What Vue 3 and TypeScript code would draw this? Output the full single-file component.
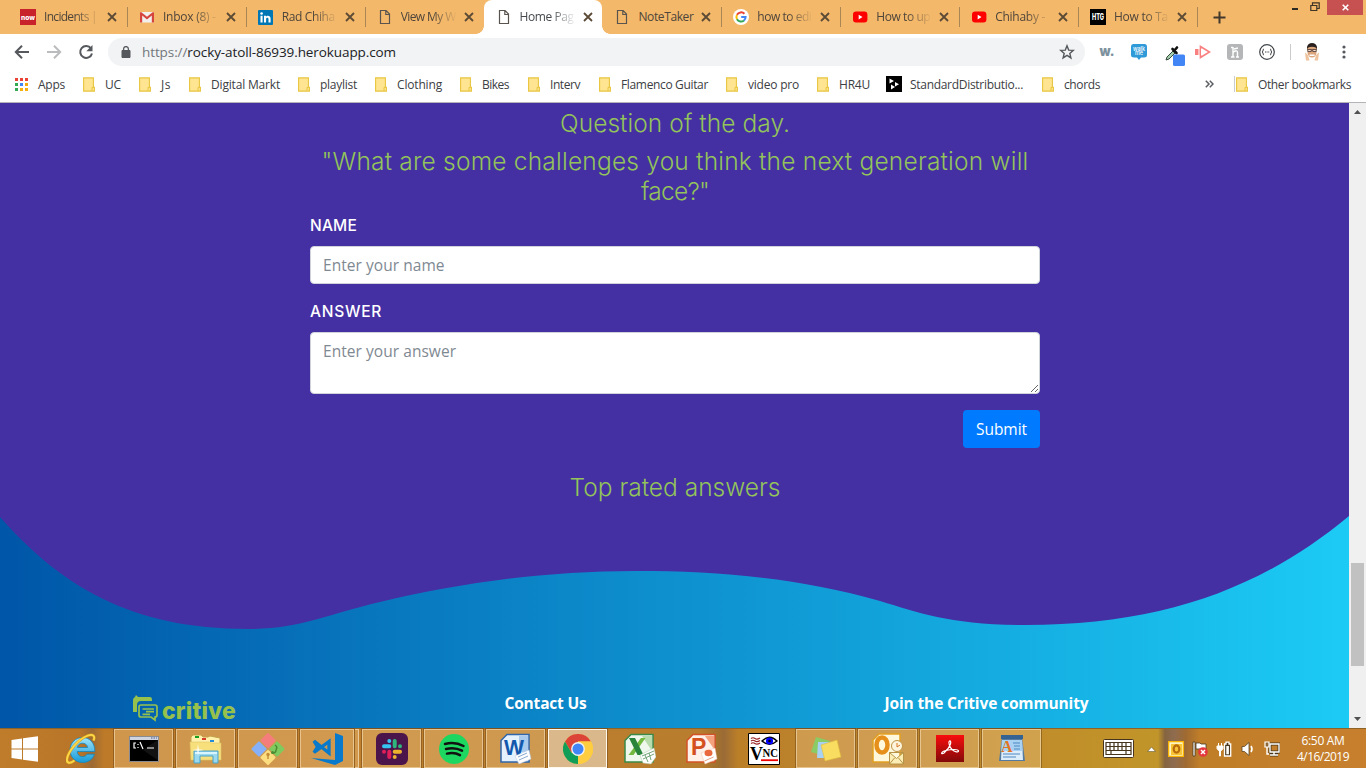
<script setup lang="ts">
interface Tab { icon: string; label: string; width: number; active?: boolean; sep?: boolean; fade?: boolean }
interface Bookmark { icon: string; label: string; width: number; slot: number }
interface Task { icon: string; open?: boolean; current?: boolean; stacked?: boolean }

/* Spreads the letters of a run of text over a given width in pixels. */
const vFit = {
  mounted(el: HTMLElement, binding: { value: number }) {
    const count = (el.textContent ?? '').trim().length
    const natural = el.getBoundingClientRect().width
    if (count > 1) el.style.letterSpacing = `${(binding.value - natural) / count}px`
  },
}

const page = '<svg width="16" height="16" viewBox="0 0 16 16"><path d="M3.5 1.5h5.6l3.4 3.6v9.4h-9zM8.8 1.7v3.8h3.7" fill="none" stroke="#59544e" stroke-width="1.2"/></svg>'
const youtube = '<svg width="16" height="16" viewBox="0 0 16 16"><rect x="1" y="2.6" width="14.4" height="11" rx="3" fill="#f00"/><path d="M6.7 5.7v4.8l3.8-2.4z" fill="#fff"/></svg>'
const folder = '<svg width="12" height="15" viewBox="0 0 12 15"><path d="M.6.9h9.8v9.3h1v3.9H.6z" fill="#ffe591" stroke="#e8c53f" stroke-width="1.1"/><path d="M9 13.8v-3.4h1.6" fill="none" stroke="#e8c53f"/></svg>'

const icons: Record<string, string> = {
  page, youtube, folder,
  now: '<svg width="16" height="16" viewBox="0 0 16 16"><path fill="#c8222b" d="M0 0h16v16H0z"/><text x="8" y="10.6" text-anchor="middle" textLength="14" lengthAdjust="spacingAndGlyphs" font-family="Inter,sans-serif" font-weight="800" font-size="7" fill="#fff">now</text></svg>',
  gmail: '<svg width="16" height="16" viewBox="0 0 16 16"><path fill="#f2f0ee" d="M1 3h14v10.5H1z"/><path d="M1 13.500V3.200h1.400L8 7.700l5.600-4.500H15v10.300h-2.200V6.600L8 10.500 3.200 6.600v6.900z" fill="#d6453b"/></svg>',
  linkedin: '<svg width="15" height="15" viewBox="0 0 15 15"><rect width="15" height="15" rx="1" fill="#0077b5"/><circle cx="3.6" cy="3.5" r="1.3" fill="#fff"/><path d="M2.5 5.8h2.1v6.6H2.5zM6 5.8h2v.9c.8-1.3 4.6-1.6 4.6 2v3.7h-2.1V9.1c0-2-2.4-1.8-2.4 0v3.3H6z" fill="#fff"/></svg>',
  google: '<svg width="16" height="16" viewBox="0 0 16 16"><circle cx="8" cy="8" r="8" fill="#fff"/><g fill="none" stroke-width="2"><path d="M4 5.8A4.6 4.6 0 0 1 11.4 4.8" stroke="#ea4335"/><path d="M4 5.8a4.6 4.6 0 0 0 0 4.4" stroke="#fbbc05"/><path d="M4 10.2a4.6 4.6 0 0 0 7 1.2" stroke="#34a853"/><path d="M11 11.4A4.6 4.6 0 0 0 12.6 8H8.2" stroke="#4285f4"/></g></svg>',
  htg: '<svg width="16" height="16" viewBox="0 0 16 16"><path d="M0 0h16v16H0z"/><text x="8" y="11.2" text-anchor="middle" textLength="12" lengthAdjust="spacingAndGlyphs" font-family="Inter,sans-serif" font-weight="800" font-size="8.5" fill="#fff">HTG</text></svg>',
  apps: '<svg width="15" height="14" viewBox="-1 0 15 14"><path d="M0 1h3v3H0zM5 1h3v3H5zM10 1h3v3h-3z" fill="#ea4335"/><path d="M0 6h3v3H0z" fill="#34a853"/><path d="M5 6h3v3H5z" fill="#4285f4"/><path d="M10 6h3v3h-3z" fill="#f5a80c"/><path d="M0 11h3v3H0z" fill="#34a853"/><path d="M5 11h3v3H5zM10 11h3v3h-3z" fill="#f5b00c"/></svg>',
  dist: '<svg width="16" height="16" viewBox="0 0 16 16"><path d="M0 0h16v16H0z"/><path d="M3.500 2.500l4.500 2.500-4.500 2.500zM9 6l4 2.300L9 10.500zM5 8.500l4 2.500-4 2.500z" fill="#fff"/></svg>',

  win: '<svg width="28" height="26" viewBox="0 0 28 26"><path d="M.5 4L11 2.5v10H.5zM12 2.3L27 .2v12.3H12zM.5 13.5H11v10L.5 22zM12 13.5h15v12.3l-15-2.1z" fill="#fff"/></svg>',
  ie: '<svg width="32" height="32" viewBox="0 0 32 32"><defs><linearGradient id="ieb" x2="0" y2="1"><stop stop-color="#9fe4fb"/><stop offset="1" stop-color="#169ad8"/></linearGradient></defs><path d="M16.5 4.500C9.500 4.500 4 9.900 4 17s5.400 12.500 12.500 12.500c5.800 0 10.200-3.100 11.900-8.300H21c-.8 1.500-2.300 2.500-4.400 2.500-3.200 0-5.200-2.200-5.400-5.200h17.600C29 10.200 24 4.500 16.500 4.500zm-5.200 10c.5-2.700 2.500-4.300 5.200-4.300s4.800 1.600 5.100 4.300z" fill="url(#ieb)" stroke="#1486bd" stroke-width=".8"/><path d="M8.500 27.500C4 31 .5 30.500 1 26 2 19 12 6 22 2.500 27 .8 29.500 3 27.500 7.500" fill="none" stroke="#dc9f16" stroke-width="2.800"/><path d="M8.500 27.500C4 31 .5 30.500 1 26 2 19 12 6 22 2.500 27 .8 29.500 3 27.500 7.500" fill="none" stroke="#fbd84a" stroke-width="1.800"/></svg>',
  cmd: '<svg width="30" height="26" viewBox="0 0 30 26"><path d="M.5.5h29v25H.5z" fill="#000" stroke="#8a8c94"/><path d="M1 1h28v3H1z" fill="#d0d4df"/><path d="M22 2h1.500m1 0H26m1 0h1" stroke="#445b93"/><path d="M7 7H5v5h2M9 8v1m0 2v1m2-6l3 7M18 12h7" fill="none" stroke="#fff" stroke-width="1.200"/><path d="M30 3v22L14 14z" fill="#fff" opacity=".07"/></svg>',
  files: '<svg width="34" height="32" viewBox="0 0 34 32"><path d="M2 4l2-2h8l2 2h5l2-1 10 2v22H2z" fill="#fff1ac" stroke="#c3a04b"/><path d="M6 4h4" stroke="#15a020" stroke-width="2"/><path d="M13 6h4" stroke="#d83b2b" stroke-width="2"/><path d="M21 8h4" stroke="#238dda" stroke-width="2"/><path d="M1 9h19l2 1h10v17H2z" fill="#f7e07b" stroke="#dfc368" stroke-width=".6"/><path d="M5 18h24v12h-5v-7H11v7H5z" fill="#9bd9ef" stroke="#4ba2c9"/><path d="M6 20h22" stroke="#d9f5ff" stroke-width="2"/><path d="M9 11l.8 5.200 5.200.8-5.200.8L9 23l-.8-5.200L3 17l5.200-.8z" fill="#fff" opacity=".85"/></svg>',
  git: '<svg width="34" height="34" viewBox="0 0 34 34"><g stroke-width="2" stroke-linejoin="round"><path d="M17 2l6.500 6.500-6.500 6.500-6.500-6.500z" fill="#f57d7b" stroke="#f57d7b"/><path d="M8 10.500l6.500 6.500L8 23.500 1.500 17z" fill="#86b0f7" stroke="#86b0f7"/><path d="M26 10.500l6.500 6.500-6.500 6.500-6.500-6.500z" fill="#7fca5f" stroke="#7fca5f"/><path d="M17 19l6.500 6.500L17 32l-6.500-6.500z" fill="#fcde80" stroke="#fcde80"/></g><path d="M24 13q3 2 1 5m-3 3q3 0 3-3" fill="none" stroke="#4b8c32" stroke-width="1.500"/><circle cx="21.500" cy="20.500" r="1.500" fill="#4b8c32"/><path d="M17 22v5" stroke="#c48c36" stroke-width="1.400"/><circle cx="17" cy="22.500" r="1.700" fill="#c48c36"/></svg>',
  code: '<svg width="34" height="34" viewBox="0 0 34 34"><path d="M25 1l8 3v25l-8 4L1 26l24 2z" fill="#0879cb"/><path d="M4 9l15 12V9.500L4 20.500l3.500-5.700z" fill="none" stroke="#0879cb" stroke-width="3.300"/></svg>',
  slack: '<svg width="32" height="32" viewBox="0 0 32 32"><rect width="32" height="32" rx="6" fill="#4b154b"/><g stroke-width="4" stroke-linecap="round"><path d="M13.300 8v0M8 13.300h5.300" stroke="#36c5f0"/><path d="M18.700 8v5.300M24 13.300v0" stroke="#2eb67d"/><path d="M18.700 24v0M18.700 18.700H24" stroke="#ecb22e"/><path d="M13.300 24v-5.300M8 18.700v0" stroke="#e01e5a"/></g></svg>',
  spotify: '<svg width="30" height="30" viewBox="0 0 30 30"><circle cx="15" cy="15" r="15" fill="#1ed760"/><path d="M6 10c7-2 13-1 18.500 2M7 15c6-1.500 11-1 16 1.700M8 19.600c5-1.200 9-.8 13 1.500" fill="none" stroke="#111" stroke-width="2.500" stroke-linecap="round"/></svg>',
  word: '<svg width="32" height="32" viewBox="0 0 32 32"><path d="M7 1.500h22V29H1V7.500z" fill="#e5f1fc" stroke="#2f65aa" stroke-width="1.500"/><path d="M19 3h9v16h-9z" fill="#a9c9ed"/><text x="4" y="21.500" textLength="20" lengthAdjust="spacingAndGlyphs" font-family="Liberation Sans,sans-serif" font-weight="700" font-size="22" fill="#1258ac">W</text><path d="M15 23l14-6 2 9-12 5z" fill="#fff" stroke="#b9cbe3" stroke-width=".5"/><path d="M18 24l9-4M19 27l9-4" stroke="#88a9d3"/></svg>',
  chrome: '<svg width="30" height="30" viewBox="0 0 30 30"><circle cx="15" cy="15" r="15" fill="#ffcd40"/><path d="M2 7.500A15 15 0 0 1 28 7.500H15L8.500 18.700z" fill="#db4437"/><path d="M2 7.500A15 15 0 0 0 15 30l6.500-11.200H8.500z" fill="#0f9d58"/><path d="M28 7.500H15v15L15 30A15 15 0 0 0 28 7.500z" fill="#ffcd40"/><circle cx="15" cy="15" r="6.900" fill="#f1f1f1"/><circle cx="15" cy="15" r="5.500" fill="#4285f4"/></svg>',
  excel: '<svg width="32" height="32" viewBox="0 0 32 32"><path d="M7 1.500h22V29H1V7.500z" fill="#eef8ec" stroke="#3a8a48" stroke-width="1.500"/><path d="M18 3h10v15z" fill="#b9dcae"/><path d="M17 5h4.500L9.500 22H4.500z" fill="#72b940"/><path d="M5 5h6l8.500 17h-6z" fill="#27843a"/><path d="M16 22l14-7 2 9-5 7-8-1z" fill="#fff" stroke="#aac9a7" stroke-width=".5"/><path d="M18 23l12-5M19 26l11-5M21 22l3 7M25 20l2 7" stroke="#75a77b"/></svg>',
  powerpoint: '<svg width="32" height="32" viewBox="0 0 32 32"><path d="M7 1.500h22V29H1V7.500z" fill="#fff0e8" stroke="#d35127" stroke-width="1.500"/><path d="M19 3h9v13z" fill="#f4a17d"/><text x="5" y="21.500" font-family="Liberation Sans,sans-serif" font-weight="700" font-size="23" fill="#d4501f">P</text><path d="M15 20l14-5 2 11-12 5z" fill="#fff" stroke="#f2c1a8" stroke-width=".5"/><ellipse cx="22.500" cy="20" rx="4" ry="3.200" fill="#e9683e"/><path d="M18.500 28l9-4" stroke="#e4a183"/></svg>',
  vnc: '<svg width="32" height="32" viewBox="0 0 32 32"><path d="M.5.500h31v31H.5z" fill="#fff" stroke="#000"/><path d="M3 5.500q2-1.500 4 0t5-.5M3 8q2-1.500 4 0t5-.5M3 10.500q2-1.500 4 0t5-.5" fill="none" stroke="#922" stroke-width="1.200"/><path d="M14 8q7.500-7.500 15 0-7.500 6.500-15 0z" fill="#fff" stroke="#000" stroke-width="1.400"/><circle cx="21.500" cy="8" r="3.600" fill="#00f"/><circle cx="21.500" cy="8" r="1.300"/><text x="2" y="27" textLength="13" lengthAdjust="spacingAndGlyphs" font-family="Liberation Serif,serif" font-weight="700" font-size="19">V</text><text x="14.500" y="24" textLength="15.500" lengthAdjust="spacingAndGlyphs" font-family="Liberation Serif,serif" font-weight="700" font-size="12">NC</text><path d="M13 27.200h17" stroke="#e00" stroke-width="1.800"/></svg>',
  notes: '<svg width="32" height="26" viewBox="0 0 32 26"><path d="M6 1l14 4-5 15L1 16z" fill="#8bcb65"/><path d="M8 6h13v16H7z" fill="#a7d2f3"/><path d="M11 9l16-5 4 17-16 4z" fill="#f8dd61" stroke="#dfbb3b" stroke-width=".6"/></svg>',
  outlook: '<svg width="32" height="32" viewBox="0 0 32 32"><path d="M7 1h21v28H1V7z" fill="#fff8dc" stroke="#e2a021" stroke-width="1.500"/><ellipse cx="10" cy="12" rx="5.500" ry="7.500" fill="none" stroke="#e6901b" stroke-width="4.500"/><circle cx="25" cy="13" r="5.500" fill="#fff5dd" stroke="#bd9145"/><path d="M25 10v4l3-2" fill="none" stroke="#d77421"/><path d="M17.500 19.500h14v11.500h-14zl7 6 7-6M17.500 31l5-6m9 6l-5-6" fill="#fbedb3" stroke="#b69347"/></svg>',
  acrobat: '<svg width="28" height="27" viewBox="0 0 28 27"><defs><linearGradient id="acr" x2="0" y2="1"><stop stop-color="#f90d0d"/><stop offset="1" stop-color="#830909"/></linearGradient></defs><path d="M0 0h28v27H0z" fill="url(#acr)"/><path d="M13.500 6c2.500-.5 1.500 6-5.500 12-3 2-4-1 2-2.500 6-1.500 12-1.300 12.500.3.300 2-4 1.200-6.500-1.300C13.500 12 12 7 13.500 6z" fill="none" stroke="#fff" stroke-width="1.200"/></svg>',
  wordpad: '<svg width="26" height="28" viewBox="0 0 26 28"><path d="M3 2h20l3 24H0z" fill="#547b9f"/><path d="M3 5h20l1 20H2z" fill="#dcecf9"/><path d="M3 5h20l.5 11h-21z" fill="#a9d2f2"/><path d="M2 0h22v4H2z" fill="#346393"/><text x="2" y="17" font-family="Liberation Serif,serif" font-weight="700" font-size="16" fill="#e37422">A</text><path d="M14 8h7M15 11h6M15 14h6M4 19h17M4 22h13" stroke="#4f88c1" stroke-width="1.200"/></svg>',
}

const tabs: Tab[] = [
  { icon: 'now', label: 'Incidents |', width: 53, sep: true, fade: true },
  { icon: 'gmail', label: 'Inbox (8) -', width: 53, sep: true, fade: true },
  { icon: 'linkedin', label: 'Rad Chiha', width: 53, sep: true, fade: true },
  { icon: 'page', label: 'View My W', width: 55, fade: true },
  { icon: 'page', label: 'Home Pag', width: 54, active: true, fade: true },
  { icon: 'page', label: 'NoteTaker', width: 55, sep: true },
  { icon: 'google', label: 'how to edi', width: 54, sep: true, fade: true },
  { icon: 'youtube', label: 'How to up', width: 54, sep: true, fade: true },
  { icon: 'youtube', label: 'Chihaby -', width: 50, sep: true, fade: true },
  { icon: 'htg', label: 'How to Ta', width: 54, sep: true, fade: true },
]

const bookmarks: Bookmark[] = [
  { icon: 'apps', label: 'Apps', width: 27, slot: 69 },
  { icon: 'folder', label: 'UC', width: 16, slot: 56 },
  { icon: 'folder', label: 'Js', width: 10, slot: 50 },
  { icon: 'folder', label: 'Digital Markt', width: 69, slot: 109 },
  { icon: 'folder', label: 'playlist', width: 37, slot: 77 },
  { icon: 'folder', label: 'Clothing', width: 45, slot: 85 },
  { icon: 'folder', label: 'Bikes', width: 27, slot: 68 },
  { icon: 'folder', label: 'Interv', width: 30, slot: 71 },
  { icon: 'folder', label: 'Flamenco Guitar', width: 87, slot: 127 },
  { icon: 'folder', label: 'video pro', width: 51, slot: 91 },
  { icon: 'folder', label: 'HR4U', width: 31, slot: 69 },
  { icon: 'dist', label: 'StandardDistributio...', width: 113, slot: 156 },
  { icon: 'folder', label: 'chords', width: 36, slot: 70 },
]

const tasks: Task[] = [
  { icon: 'cmd', open: true }, { icon: 'files', open: true }, { icon: 'git', open: true },
  { icon: 'code', open: true, stacked: true }, { icon: 'slack', open: true }, { icon: 'spotify', open: true },
  { icon: 'word', open: true }, { icon: 'chrome', open: true, current: true }, { icon: 'excel' },
  { icon: 'powerpoint' }, { icon: 'vnc' }, { icon: 'notes', open: true }, { icon: 'outlook', open: true },
  { icon: 'acrobat', open: true }, { icon: 'wordpad', open: true },
]
</script>

<template>
  <div class="screen">
    <div class="tabstrip">
      <div v-for="(t, i) in tabs" :key="i" class="tab" :class="{ active: t.active, sep: t.sep }">
        <span class="favicon" v-html="icons[t.icon]"></span>
        <span class="tab-label" :class="{ fade: t.fade }"><span v-fit="t.width" class="run">{{ t.label }}</span></span>
        <svg class="close" width="10" height="10" viewBox="0 0 10 10"><path d="M1 1l8 8M9 1L1 9" stroke="#5b4a35" stroke-width="1.8" /></svg>
      </div>
      <svg class="new-tab" width="13" height="13" viewBox="0 0 13 13"><path d="M6.500 .5v12M.5 6.500h12" stroke="#42382c" stroke-width="2" /></svg>
      <div class="window-controls">
        <svg class="min" width="8" height="4" viewBox="0 0 8 4"><path d="M1 2h6" stroke="#2d2923" stroke-width="2" /></svg>
        <svg class="restore" width="10" height="10" viewBox="0 0 10 10"><path d="M2.500 3V.8h6.700v5.700H7M.8 3.500h6v5h-6z" fill="none" stroke="#3d3327" stroke-width="1.2" /></svg>
        <span class="close-window"><svg width="7" height="7" viewBox="0 0 7 7"><path d="M.7.7l5.600 5.600M6.300.7L.7 6.300" stroke="#fff" stroke-width="1.600" /></svg></span>
      </div>
    </div>

    <div class="toolbar">
      <div class="nav">
        <svg width="16" height="16" viewBox="0 0 16 16"><path d="M15 8H2M8 1.800L1.800 8 8 14.200" fill="none" stroke="#55585c" stroke-width="2" /></svg>
        <svg width="16" height="16" viewBox="0 0 16 16"><path d="M1 8h13M8 1.800L14.200 8 8 14.200" fill="none" stroke="#babcbe" stroke-width="2" /></svg>
        <svg width="16" height="16" viewBox="0 0 16 16"><path d="M13 4.300A6 6 0 1 0 14 9.500" fill="none" stroke="#55585c" stroke-width="2" /><path d="M14.500 1v6.200H8.300z" fill="#55585c" /></svg>
      </div>
      <div class="omnibox">
        <svg width="10" height="12" viewBox="0 0 10 12"><path d="M1 4.500h8v7H1z" fill="#55585c" stroke="#55585c" /><path d="M2.600 5V3a2.400 2.400 0 0 1 4.800 0v2" fill="none" stroke="#55585c" stroke-width="1.300" /></svg>
        <span v-fit="254" class="url"><span class="scheme">https://</span>rocky-atoll-86939.herokuapp.com</span>
        <svg class="star" width="16" height="16" viewBox="0 0 16 16"><path d="M8 1.800l1.700 4.300 4.600.3-3.500 3 1.100 4.500L8 11.400l-3.900 2.500 1.100-4.500-3.500-3 4.600-.3z" fill="none" stroke="#55585c" stroke-width="1.400" /></svg>
      </div>
      <div class="extensions">
        <svg width="17" height="16" viewBox="0 0 17 16"><text x="1.500" y="11.500" textLength="15" lengthAdjust="spacingAndGlyphs" font-family="Inter,sans-serif" font-weight="900" font-size="13" fill="#7d929e">w.</text></svg>
        <svg width="16" height="16" viewBox="0 0 16 16"><path d="M2.500 0h11Q16 0 16 3v8q0 2.500-3 2.500h-3L8 16l-2-2.500H3Q0 13.500 0 11V3q0-3 2.500-3z" fill="#2f9ad8" /><text x="8" y="6.800" text-anchor="middle" font-family="Inter,sans-serif" font-weight="500" font-size="5.500" fill="#fff">walk</text><text x="8" y="11.300" text-anchor="middle" font-family="Inter,sans-serif" font-weight="500" font-size="5.500" fill="#fff">me</text></svg>
        <svg width="20" height="21" viewBox="0 0 20 21"><path d="M1 15l1-3 6-6 2 2-6 6z" fill="#a5cfae" stroke="#344a3b" /><path d="M7.500 4l4 4M9 6l3-3.500" stroke="#111" stroke-width="2.600" stroke-linecap="round" /><rect x="8" y="9.500" width="12" height="11.500" rx="1.500" fill="#4285f4" /></svg>
        <svg width="16" height="14" viewBox="0 0 16 14"><path d="M5.500 4V1.500L14.500 7l-9 5.500V10" fill="none" stroke="#f98080" stroke-width="1.700" /><path d="M0 4h3.500v6H0zM4.500 4H6v6H4.500z" fill="#f98080" /></svg>
        <svg width="16" height="16" viewBox="0 0 16 16"><rect width="16" height="16" rx="3" fill="#b5b6b8" /><path d="M6 3v10M4 13h3.500M4 3.500h2M6 8.500c3-3 4.500-1.500 4.500 0V13M9 13h3M7 5l4-1" fill="none" stroke="#fff" stroke-width="1.400" /></svg>
        <svg width="16" height="16" viewBox="0 0 16 16"><circle cx="8" cy="8" r="7.300" fill="#fff" stroke="#3f4347" stroke-width="1.200" /><path d="M5 5Q3.800 5 4 7L3.200 8 4 9q-.2 2 1 2M11 5q1.200 0 1 2l.8 1-.8 1q.2 2-1 2M6 8h1m.6 0h1m.6 0h1" fill="none" stroke="#3f4347" /></svg>
      </div>
      <div class="profile">
        <svg width="14" height="18" viewBox="0 0 14 18"><path d="M2 7V4q1-4 5-4t5 4v3z" fill="#29211f" /><path d="M2.500 5q4.500-2.500 9 0v5q-1 4.500-4.500 4.500T2.500 10z" fill="#dca57c" /><path d="M2.800 6.500h3.400v2H2.800zM7.800 6.500h3.400v2H7.800zM6 7h2" fill="#f8ddd0" stroke="#4a3832" stroke-width=".8" /><path d="M0 9.500l3 2.500 1.500 5.500H1zM14 9.500L11 12l-1.500 5.500H13z" fill="#efc39e" /><path d="M4.500 11.500h5V13h-5z" fill="#fff" /></svg>
      </div>
      <svg class="menu" width="4" height="14" viewBox="0 0 4 14"><g fill="#55585c"><circle cx="2" cy="2" r="1.600" /><circle cx="2" cy="7" r="1.600" /><circle cx="2" cy="12" r="1.600" /></g></svg>
    </div>

    <div class="bookmarks">
      <div v-for="b in bookmarks" :key="b.label" class="bookmark" :style="{ width: b.slot + 'px' }">
        <span class="bm-icon" :class="{ wide: b.icon !== 'folder' }" v-html="icons[b.icon]"></span>
        <span v-fit="b.width" class="run">{{ b.label }}</span>
      </div>
      <svg class="overflow" width="9" height="8" viewBox="0 0 9 8"><path d="M.8.8L4 4 .8 7.200M4.800.8L8 4 4.800 7.200" fill="none" stroke="#5a5d61" stroke-width="1.500" /></svg>
      <span class="divider"></span>
      <div class="bookmark">
        <span class="bm-icon" v-html="icons.folder"></span>
        <span v-fit="93" class="run">Other bookmarks</span>
      </div>
    </div>

    <div class="viewport">
      <main class="site">
        <svg class="wave" width="1349" height="625" viewBox="0 103 1349 625">
          <defs><linearGradient id="sea"><stop stop-color="#0056a8" /><stop offset="1" stop-color="#1ccbf5" /></linearGradient></defs>
          <path d="M0 517C60 585 130 629 248 629C300 629 325 615 380 602C460 583 545 571 636 571C720 571 800 578 880 601C920 613 950 625 1026 625C1160 625 1260 590 1349 516V728H0z" fill="url(#sea)" />
        </svg>
        <section class="question">
          <h3><span v-fit="230" class="run">Question of the day.</span></h3>
          <h3>
            <span v-fit="707" class="run">"What are some challenges you think the next generation will</span>
            <span v-fit="68" class="run">face?"</span>
          </h3>
          <label><span v-fit="47" class="run">NAME</span></label>
          <input type="text" placeholder="Enter your name" />
          <label><span v-fit="72" class="run">ANSWER</span></label>
          <textarea rows="2" placeholder="Enter your answer"></textarea>
          <button type="button"><span v-fit="51" class="run">Submit</span></button>
          <h3 class="top"><span v-fit="211" class="run">Top rated answers</span></h3>
        </section>
        <footer>
          <div class="brand">
            <svg width="27" height="27" viewBox="0 0 27 27"><path d="M1 17V5q0-2 2-3l1-2 2 2h12q2 0 2 3v1H9Q5 6 5 10v7z" fill="#97c14d" /><path d="M9 10h14q2 0 2 2v8q0 2-2 2v3l-4-3H9q-2 0-2-2v-8q0-2 2-2zM10.500 14H22M14 16.700h8M10.500 19.300H18" fill="none" stroke="#97c14d" stroke-width="1.700" /></svg>
            <span v-fit="74" class="run">critive</span>
          </div>
          <div class="contact"><span v-fit="82" class="run">Contact Us</span></div>
          <div class="join"><span v-fit="204" class="run">Join the Critive community</span></div>
        </footer>
      </main>
      <div class="scrollbar">
        <svg width="7" height="4" viewBox="0 0 7 4"><path d="M0 4L3.500 0 7 4z" fill="#505050" /></svg>
        <div class="thumb"></div>
        <svg width="7" height="4" viewBox="0 0 7 4"><path d="M0 0l3.500 4L7 0z" fill="#505050" /></svg>
      </div>
    </div>

    <div class="taskbar">
      <span class="start" v-html="icons.win"></span>
      <span class="ie" v-html="icons.ie"></span>
      <div v-for="t in tasks" :key="t.icon" class="slot">
        <span class="task" :class="{ open: t.open, current: t.current, stacked: t.stacked }" v-html="icons[t.icon]"></span>
        <span v-if="t.stacked" class="stack-edge"></span>
      </div>
      <div class="tray">
        <svg class="keyboard" width="31" height="19" viewBox="0 0 31 19"><rect x=".5" y=".5" width="30" height="18" rx="1" fill="#fff" stroke="#46351c" /><path d="M3 3.500h25v12H3zM3 7.500h25M3 11.500h25M7 3.500v8M11 3.500v8M15 3.500v8M19 3.500v8M23 3.500v8M8 11.500v4M23 11.500v4" fill="none" stroke="#46351c" stroke-width="1.200" /></svg>
        <svg class="chevron" width="9" height="6" viewBox="0 0 9 6"><path d="M.5 5.500l4-4.500 4 4.500z" fill="#fff" stroke="#695a38" stroke-width=".6" /></svg>
        <svg width="16" height="16" viewBox="0 0 16 16"><path d="M.5.5h15v15H.5z" fill="#fff5c1" stroke="#fbb400" stroke-width="1.500" /><path d="M3 3h11v11H3z" fill="#f8c436" /><ellipse cx="8.500" cy="8" rx="2.800" ry="3.600" fill="none" stroke="#b86c0c" stroke-width="2.200" /></svg>
        <svg width="16" height="16" viewBox="0 0 16 16"><path d="M1 1h2v14H1zM4 2h4l1 1h5v6H9L8 8H4z" fill="#fff" stroke="#48391e" stroke-width=".8" /><circle cx="11" cy="11" r="4.800" fill="#e5363d" /><path d="M9 9l4 4M13 9l-4 4" stroke="#fff" stroke-width="1.500" /></svg>
        <svg width="16" height="16" viewBox="0 0 16 16"><path d="M8.500 3h1.500V1.200h3V3h1.700v12H8.500z" fill="#4b3a20" stroke="#fff" stroke-width="1.300" /><path d="M10.300 5h2.600v8.300h-2.600z" fill="#fff" /><path d="M1 5h6v2.500L5.500 9.500h-3L1 7.500zM3.500 9v6h1V9zM2.500 2v3M5.500 2v3" fill="#fff" stroke="#fff" stroke-width="1" /></svg>
        <svg width="16" height="16" viewBox="0 0 16 16"><path d="M2 5.500h2.500L9 1.500v13L4.500 10.500H2z" fill="#fff" stroke="#554322" stroke-width=".8" /><path d="M11 5q2 3 0 6" fill="none" stroke="#fff" stroke-width="1.600" /></svg>
        <svg width="16" height="16" viewBox="0 0 16 16"><path d="M6 3h9v8H6zM10 11v3M6 14h8" fill="none" stroke="#493719" stroke-width="3" /><path d="M6 3h9v8H6zM10 11v3M6 14h8M3 6v7h2" fill="none" stroke="#fff" stroke-width="1.400" /><path d="M1 1h4v5H1z" fill="#8d6735" stroke="#fff" stroke-width="1.200" /></svg>
        <div class="clock"><span v-fit="43" class="run">6:50 AM</span><span v-fit="52" class="run">4/16/2019</span></div>
      </div>
    </div>
  </div>
</template>

<style>
html, body { margin: 0; overflow: hidden; }
</style>

<style scoped>
.screen { width: 1366px; height: 768px; display: flex; flex-direction: column; overflow: hidden; background: #fff; font-family: "Open Sans", "Noto Sans", sans-serif; font-size: 12px; color: #3c4043; }
.screen * { box-sizing: border-box; }
.screen :deep(svg) { display: block; flex: none; }
.run { display: inline-block; white-space: nowrap; }

.tabstrip { height: 34px; flex: none; display: flex; background: #f3b86a; padding-left: 8px; }
.tab { width: 118.9px; height: 34px; flex: none; display: flex; align-items: center; padding-left: 12px; position: relative; color: #4f453b; }
.favicon { width: 16px; flex: none; margin-right: 8px; }
.tab-label { width: 56px; flex: none; overflow: hidden; line-height: 18px; }
.tab-label.fade { -webkit-mask-image: linear-gradient(90deg, #000 55%, transparent 100%); mask-image: linear-gradient(90deg, #000 55%, transparent 100%); }
.close { margin-left: 7px; }
.tab.sep::after { content: ""; position: absolute; right: -1px; top: 7px; width: 1px; height: 20px; background: #a88655; }
.tab.active { background: #fff; border-radius: 8px 8px 0 0; color: #45494d; }
.tab.active::before, .tab.active::after { content: ""; position: absolute; bottom: 0; width: 8px; height: 8px; }
.tab.active::before { left: -8px; background: radial-gradient(circle at 0 0, transparent 7.5px, #fff 8px); }
.tab.active::after { right: -8px; background: radial-gradient(circle at 100% 0, transparent 7.5px, #fff 8px); }
.new-tab { margin: 11px 0 0 16px; }
.window-controls { margin-left: auto; display: flex; align-items: flex-start; }
.min { margin: 7px 11px 0 0; }
.restore { margin: 2px 7px 0 0; }
.close-window { width: 36px; height: 15px; margin-right: 3px; background: #c75050; display: flex; align-items: center; justify-content: center; }

.toolbar { height: 36px; flex: none; display: flex; align-items: center; }
.nav { width: 108px; padding-left: 14px; display: flex; gap: 16px; }
.omnibox { width: 977px; height: 28px; border-radius: 14px; background: #f1f3f4; display: flex; align-items: center; padding: 0 10px 0 13px; color: #202124; }
.url { margin-left: 11px; font-size: 13.5px; white-space: nowrap; }
.scheme { color: #72777c; }
.star { margin-left: auto; }
.extensions { display: flex; align-items: center; width: 213px; padding-left: 13px; gap: 16px; }
.extensions svg:nth-child(3) { margin: 6px -4px 0 2px; }
.extensions svg:nth-child(n + 4) { margin-left: -2px; margin-right: 2px; }
.profile { height: 16px; border-left: 1px solid #c9cbcd; padding-left: 14px; margin-left: -8px; width: 49px; }
.profile svg { margin-top: -1px; }
.menu { margin-left: 3px; }

.bookmarks { height: 33px; flex: none; display: flex; align-items: center; padding: 0 0 4px 14px; border-bottom: 1px solid #b4b4b6; }
.bookmark { display: flex; align-items: center; flex: none; height: 20px; }
.bm-icon { width: 22px; flex: none; }
.bm-icon.wide { width: 24px; }
.overflow { margin-left: 93px; }
.divider { width: 1px; height: 16px; margin: 0 1px 0 20px; background: #c9cbcd; }

.viewport { height: 625px; flex: none; display: flex; }
.site { width: 1349px; height: 625px; position: relative; background: #4430a3; overflow: hidden; }
.wave { position: absolute; inset: 0; }
.question { position: relative; width: 730px; height: 580px; margin-left: 310px; padding-top: 5px; display: flex; flex-direction: column; }
h3 { display: flex; flex-direction: column; align-items: center; margin: 0 0 8px; font-family: Inter, "Open Sans", sans-serif; font-weight: 300; font-size: 24.5px; line-height: 30px; color: #93c35a; }
label { font-family: Inter, "Open Sans", sans-serif; font-weight: 500; font-size: 15.5px; line-height: 24px; color: #fff; margin-bottom: 8px; }
input, textarea { display: block; width: 730px; margin: 0 0 16px; border: 1px solid #ced4da; border-radius: 4px; padding: 6px 12px; font-family: "Open Sans", sans-serif; font-size: 15.5px; line-height: 24px; letter-spacing: .05px; background: #fff; outline: none; }
input { height: 38px; }
textarea { height: 62px; overflow: auto; resize: vertical; }
input::placeholder, textarea::placeholder { color: #7f8992; opacity: 1; }
button { align-self: flex-end; width: 77px; height: 38px; padding: 0; border: 0; border-radius: 4px; background: #007bff; color: #fff; font-family: "Open Sans", sans-serif; font-size: 15.5px; line-height: 24px; }
.top { margin-top: 24px; }
footer { position: relative; display: flex; align-items: flex-start; padding-left: 132px; height: 45px; color: #fff; font-size: 15.5px; font-weight: 700; line-height: 24px; }
.brand { width: 372.5px; display: flex; margin-top: 12px; color: #97c14d; font-family: Inter, sans-serif; font-weight: 800; font-size: 23px; line-height: 30px; }
.brand .run { margin-left: 3px; margin-top: 1px; }
.contact { width: 380px; margin-top: 8px; }
.join { margin-top: 8px; }
.scrollbar { width: 17px; background: #f0f0f0; display: flex; flex-direction: column; align-items: center; padding: 7px 0; }
.thumb { width: 13px; height: 103px; background: #c1c1c1; margin: 449px 0 51px; }

.taskbar { height: 40px; flex: none; display: flex; align-items: center; border-top: 1px solid #8e6327; background: linear-gradient(90deg, #bf7d2b 0, #b97528 80px, #9c6a35 92px, #bd7a28 104px, #c0802d 350px, #b87d2e 700px, #a0702e 718px, #9b6b37 724px, #bb7f28 738px, #bd8530 900px, #c08d2a 1040px, #c19529 1158px, #846440 1165px, #8f6c50 1174px, #a06a31 1186px, #c07e28 1200px, #c77f2e 1366px); }
.start { width: 50px; padding-left: 11px; }
.ie { width: 62px; padding-left: 16px; }
.slot { width: 62px; height: 39px; flex: none; display: flex; padding: 0 1px 0 2px; }
.task { width: 59px; height: 39px; display: flex; align-items: center; justify-content: center; }
.task.open { background: rgba(238, 200, 140, .36); border: 1px solid rgba(255, 237, 205, .5); outline: 1px solid rgba(105, 67, 21, .5); outline-offset: 0; }
.task.current { background: rgba(239, 224, 202, .6); border-color: #fff8ec; }
.task.stacked { width: 54px; }
.stack-edge { width: 4px; margin-left: 1px; border: 1px solid rgba(255, 237, 205, .6); border-left: 0; background: rgba(238, 200, 140, .35); }
.tray { margin-left: auto; width: 263px; display: flex; align-items: center; gap: 8px; color: #fff; }
.keyboard { margin-right: 5px; }
.chevron { margin-right: 4px; }
.clock { width: 84px; margin-left: -7px; display: flex; flex-direction: column; align-items: center; font-size: 12px; line-height: 16px; }
</style>
